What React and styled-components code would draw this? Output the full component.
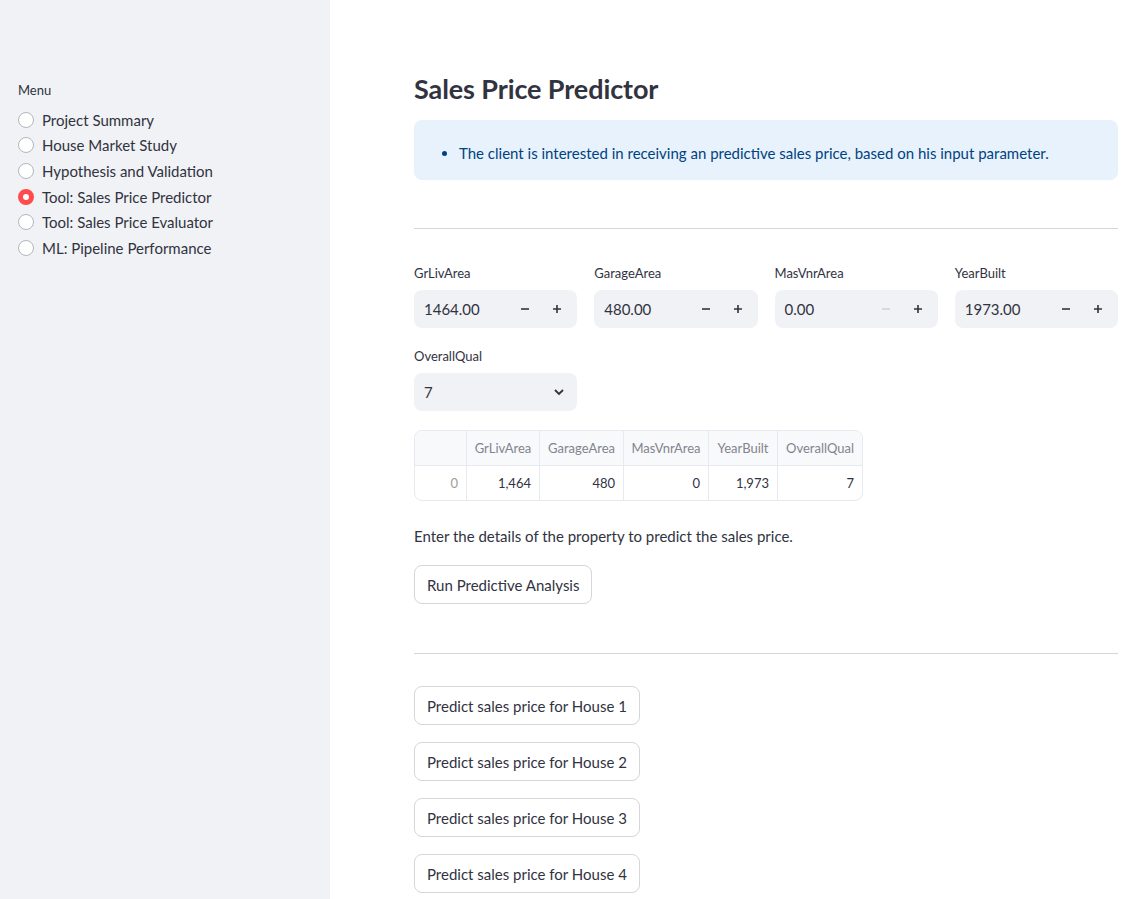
import React from 'react'
import styled, { createGlobalStyle } from 'styled-components'

const GlobalStyle = createGlobalStyle`
  html, body {
    margin: 0;
    padding: 0;
    background: #fff;
  }
  body {
    font-family: Lato, "Noto Sans", sans-serif;
    color: #31333f;
  }
  * { box-sizing: border-box; }
`

const menuItems = [
  'Project Summary',
  'House Market Study',
  'Hypothesis and Validation',
  'Tool: Sales Price Predictor',
  'Tool: Sales Price Evaluator',
  'ML: Pipeline Performance',
]

const numberInputs = [
  { label: 'GrLivArea', value: '1464.00' },
  { label: 'GarageArea', value: '480.00' },
  { label: 'MasVnrArea', value: '0.00', minDisabled: true },
  { label: 'YearBuilt', value: '1973.00' },
]

const columns = [
  { name: '', width: 51 },
  { name: 'GrLivArea', width: 73 },
  { name: 'GarageArea', width: 84 },
  { name: 'MasVnrArea', width: 85 },
  { name: 'YearBuilt', width: 69 },
  { name: 'OverallQual', width: 85 },
]
const rowValues = ['0', '1,464', '480', '0', '1,973', '7']

const App = () => {
  return (
    <>
      <GlobalStyle />
      <Page>
        <Sidebar>
          <MenuLabel>Menu</MenuLabel>
          <RadioList>
            {menuItems.map((item) => {
              const selected = item === 'Tool: Sales Price Predictor'
              return (
                <RadioRow key={item}>
                  <RadioDot $selected={selected} />
                  <span>{item}</span>
                </RadioRow>
              )
            })}
          </RadioList>
        </Sidebar>

        <Main>
          <Title>Sales Price Predictor</Title>
          <InfoBox>
            <ul>
              <li>The client is interested in receiving an predictive sales price, based on his input parameter.</li>
            </ul>
          </InfoBox>

          <Divider $top={48} $bottom={35} />

          <InputGrid>
            {numberInputs.map((input) => (
              <Field key={input.label}>
                <FieldLabel>{input.label}</FieldLabel>
                <InputBox>
                  <InputValue>{input.value}</InputValue>
                  <StepButton $disabled={input.minDisabled}>
                    <svg width="10" height="10" viewBox="0 0 10 10">
                      <path d="M1 5h8" stroke="currentColor" strokeWidth="1.6" />
                    </svg>
                  </StepButton>
                  <StepButton>
                    <svg width="10" height="10" viewBox="0 0 10 10">
                      <path d="M1 5h8M5 1v8" stroke="currentColor" strokeWidth="1.6" />
                    </svg>
                  </StepButton>
                </InputBox>
              </Field>
            ))}
            <Field>
              <FieldLabel>OverallQual</FieldLabel>
              <InputBox>
                <InputValue>7</InputValue>
                <Chevron>
                  <svg width="12" height="12" viewBox="0 0 12 12">
                    <path d="M2 4l4 4 4-4" stroke="currentColor" strokeWidth="1.8" fill="none" />
                  </svg>
                </Chevron>
              </InputBox>
            </Field>
          </InputGrid>

          <Table>
            <colgroup>
              {columns.map((col, i) => (
                <col key={i} style={{ width: col.width }} />
              ))}
            </colgroup>
            <thead>
              <tr>
                {columns.map((col, i) => (
                  <HeadCell key={i}>{col.name}</HeadCell>
                ))}
              </tr>
            </thead>
            <tbody>
              <tr>
                {rowValues.map((v, i) => (
                  <BodyCell key={i} $index={i === 0}>{v}</BodyCell>
                ))}
              </tr>
            </tbody>
          </Table>

          <Paragraph>Enter the details of the property to predict the sales price.</Paragraph>
          <Button>Run Predictive Analysis</Button>

          <Divider $top={49} $bottom={32} />

          <ButtonStack>
            {[1, 2, 3, 4].map((n) => (
              <Button key={n}>Predict sales price for House {n}</Button>
            ))}
          </ButtonStack>
        </Main>
      </Page>
    </>
  )
}

const Page = styled.div`
  display: flex;
  min-height: 100vh;
`

const Sidebar = styled.aside`
  width: 330px;
  flex-shrink: 0;
  background: #f0f2f6;
  padding: 82px 18px 0;
`

const MenuLabel = styled.div`
  font-size: 13px;
  line-height: 16px;
  margin-bottom: 9px;
`

const RadioList = styled.div`
  display: flex;
  flex-direction: column;
`

const RadioRow = styled.div`
  display: flex;
  align-items: center;
  gap: 8px;
  height: 25.6px;
  font-size: 15px;
`

const RadioDot = styled.span`
  width: 16px;
  height: 16px;
  border-radius: 50%;
  flex-shrink: 0;
  background: #fff;
  border: ${(p) => (p.$selected ? '5px solid #ff4b4b' : '1px solid #b4b6bd')};
`

const Main = styled.main`
  flex: 1;
  padding: 70px 8px 0 84px;
  min-width: 0;
`

const Title = styled.h2`
  margin: 0 0 12px;
  font-size: 27px;
  line-height: 38px;
  font-weight: 700;
  letter-spacing: -0.1px;
`

const InfoBox = styled.div`
  background: #e8f2fc;
  color: #004280;
  border-radius: 8px;
  height: 60px;
  display: flex;
  align-items: center;
  padding: 5px 24px 0 20px;
  font-size: 15px;

  ul {
    margin: 0;
    padding-left: 25px;
  }
`

const Divider = styled.hr`
  border: none;
  border-top: 1px solid #d6d6d9;
  margin: ${(p) => p.$top}px 0 ${(p) => p.$bottom}px;
`

const InputGrid = styled.div`
  display: grid;
  grid-template-columns: repeat(4, 1fr);
  column-gap: 17px;
  row-gap: 19px;
`

const Field = styled.div`
  display: flex;
  flex-direction: column;
`

const FieldLabel = styled.label`
  font-size: 13px;
  line-height: 18px;
  margin-bottom: 8px;
`

const InputBox = styled.div`
  display: flex;
  align-items: center;
  height: 38px;
  background: #f0f2f6;
  border-radius: 8px;
  padding: 0 4px 0 10px;
`

const InputValue = styled.span`
  flex: 1;
  font-size: 15px;
`

const StepButton = styled.span`
  width: 32px;
  height: 38px;
  display: flex;
  align-items: center;
  justify-content: center;
  color: ${(p) => (p.$disabled ? '#d0d2d8' : '#31333f')};
`

const Chevron = styled.span`
  width: 28px;
  display: flex;
  align-items: center;
  justify-content: center;
  color: #31333f;
`

const Table = styled.table`
  margin-top: 19px;
  table-layout: fixed;
  width: 447px;
  border-collapse: separate;
  border-spacing: 0;
  border: 1px solid #e6e9ef;
  border-radius: 8px;
  overflow: hidden;
  font-size: 13px;
`

const HeadCell = styled.th`
  height: 35px;
  background: #f8f9fb;
  color: #82848e;
  font-weight: 400;
  text-align: center;
  padding: 0 4px;
  white-space: nowrap;
  border-left: 1px solid #e6e9ef;
  border-bottom: 1px solid #e6e9ef;
  &:first-child { border-left: none; }
`

const BodyCell = styled.td`
  height: 34px;
  padding: 0 8px;
  text-align: right;
  color: ${(p) => (p.$index ? '#a09c9a' : '#31333f')};
  border-left: 1px solid #e6e9ef;
  &:first-child { border-left: none; }
`

const Paragraph = styled.p`
  font-size: 15px;
  margin: 26px 0 20px;
`

const Button = styled.button`
  font-family: inherit;
  font-size: 15px;
  color: #31333f;
  background: #fff;
  border: 1px solid #d6d6d9;
  border-radius: 8px;
  height: 39px;
  padding: 0 12px;
  cursor: pointer;
  align-self: flex-start;
`

const ButtonStack = styled.div`
  display: flex;
  flex-direction: column;
  gap: 17px;
  padding-bottom: 20px;
`

export default App
